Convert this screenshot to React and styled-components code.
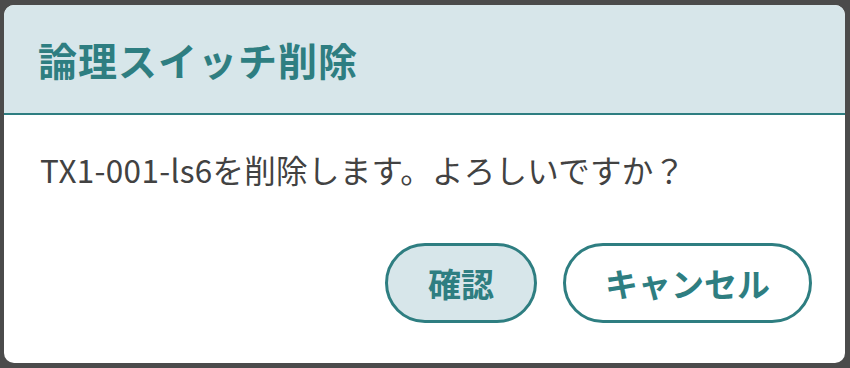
import React from 'react'
import {styled, createGlobalStyle} from 'styled-components'

const Global = createGlobalStyle`
  html, body {
    margin: 0;
    padding: 0;
    background: #4b4b4b;
  }
  body {
    font-family: "Noto Sans CJK JP", "Noto Sans", sans-serif;
  }
`

const Backdrop = styled.div`
  width: 850px;
  height: 368px;
  box-sizing: border-box;
  padding: 5px 5px 5px 4px;
  background: #4b4b4b;
`

const Dialog = styled.section`
  display: flex;
  flex-direction: column;
  height: 100%;
  background: #fff;
  border-radius: 10px;
  overflow: hidden;
`

const Header = styled.header`
  display: flex;
  align-items: center;
  height: 108px;
  padding: 0 34px;
  background: #d7e6ea;
  border-bottom: 2px solid #2e7e81;
`

const Title = styled.h2`
  margin: 0;
  font-size: 39px;
  font-weight: 700;
  color: #2e7e81;
  letter-spacing: 1px;
`

const Body = styled.div`
  display: flex;
  flex-direction: column;
  flex: 1;
  padding: 36px 33px 40px 36px;
`

const Message = styled.p`
  margin: 0;
  font-size: 31.5px;
  line-height: 1.2;
  color: #424242;
  letter-spacing: 0.3px;
`

const Actions = styled.div`
  display: flex;
  justify-content: flex-end;
  gap: 26px;
  margin-top: auto;
`

const Button = styled.button`
  height: 80px;
  padding: 0 ${p => p.$pad}px;
  border: 3px solid #2e7e81;
  border-radius: 40px;
  background: ${p => p.$primary ? '#d7e6ea' : '#fff'};
  color: #2e7e81;
  font-family: inherit;
  font-size: 33px;
  font-weight: 700;
  cursor: pointer;
`

export default function App() {
  return (
    <Backdrop>
      <Global />
      <Dialog>
        <Header>
          <Title>論理スイッチ削除</Title>
        </Header>
        <Body>
          <Message>TX1-001-ls6を削除します。よろしいですか？</Message>
          <Actions>
            <Button $primary $pad={40}>確認</Button>
            <Button $pad={39}>キャンセル</Button>
          </Actions>
        </Body>
      </Dialog>
    </Backdrop>
  )
}
